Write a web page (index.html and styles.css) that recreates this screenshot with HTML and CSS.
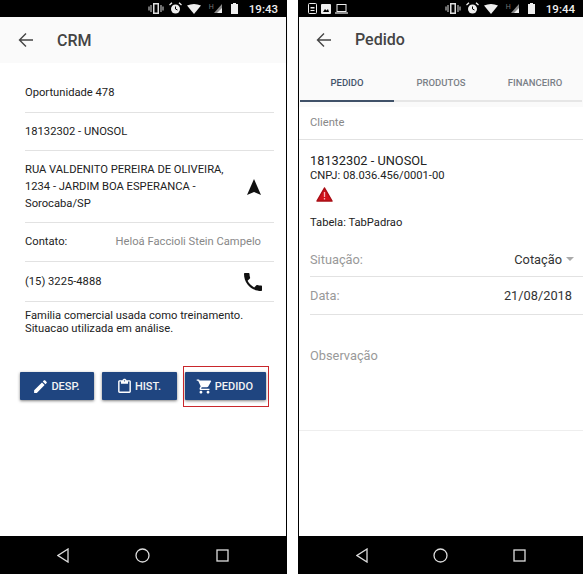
FILE: index.html
```html
<!DOCTYPE html>
<html lang="pt">
  <head>
    <meta charset="UTF-8">
    <meta name="viewport" content="width=device-width, initial-scale=1.0">
    <title>CRM</title>
    <link rel="stylesheet" href="styles.css">
  </head>
  <body>
    <div class="screens">
      <!-- CRM screen -->
      <div class="phone phone-left">
        <div class="status">
          <div class="status-left"></div>
          <div class="status-right">
            <svg class="st" width="16" height="11" viewBox="0 0 16 11"><path d="M5 0h6v11H5z M6.5 1.5v8h3v-8z" fill="#ddd" fill-rule="evenodd"/><path d="M3 2v7M1 3.5v4M13 2v7M15 3.5v4" stroke="#ddd" stroke-width="1"/></svg>
            <svg class="st" width="13" height="13" viewBox="0 0 13 13"><circle cx="6.5" cy="7" r="4.5" fill="#eee"/><path d="M6.5 4.5V7l2 1" stroke="#000" fill="none"/><path d="M0.5 3l2.5-2.2M12.5 3L10 .8" stroke="#eee" stroke-width="1.3"/></svg>
            <svg class="st" width="14" height="10" viewBox="0 0 14 10"><path d="M0 1.500Q7-1.500 14 1.500L7 10z" fill="#eee"/></svg>
            <span class="st-h">H</span>
            <svg class="st st-sig" width="8" height="9" viewBox="0 0 8 9"><path d="M8 0v9H0z" fill="#888"/><path d="M8 4v5H3z" fill="#eee"/></svg>
            <svg class="st st-bat" width="7" height="11" viewBox="0 0 7 11"><path d="M2 0h3v1h2v10H0V1h2z" fill="#eee"/></svg>
            <span class="clock">19:43</span>
          </div>
        </div>
        <div class="appbar">
          <svg class="back" width="16" height="16" viewBox="0 0 16 16"><path d="M15 8H2M8 1.500L1.500 8 8 14.500" fill="none" stroke="#444" stroke-width="1.400"/></svg>
          <span class="title">CRM</span>
        </div>
        <div class="content">
          <div class="info-list">
            <div class="row row-a">Oportunidade 478</div>
            <div class="row row-b">18132302 - UNOSOL</div>
            <div class="row row-c">
              <span class="address">RUA VALDENITO PEREIRA DE OLIVEIRA, 1234 - JARDIM BOA ESPERANCA - Sorocaba/SP</span>
              <svg class="nav-icon" width="14" height="16" viewBox="0 0 14 16"><path d="M7 0L14 16 7 13 0 16z" fill="#111"/></svg>
            </div>
            <div class="row row-d"><span>Contato:</span><span class="contact-name">Heloá Faccioli Stein Campelo</span></div>
            <div class="row row-e">
              <span>(15) 3225-4888</span>
              <svg class="phone-icon" width="18" height="18" viewBox="3 3 18 18"><path d="M6.600 10.800c1.400 2.800 3.800 5.100 6.600 6.600l2.200-2.200c.3-.3.7-.4 1-.2 1.100.4 2.300.6 3.600.6.600 0 1 .4 1 1V20c0 .6-.4 1-1 1C10.600 21 3 13.400 3 4c0-.6.400-1 1-1h3.500c.6 0 1 .4 1 1 0 1.300.2 2.500.6 3.600.1.300 0 .7-.2 1z" fill="#111"/></svg>
            </div>
          </div>
          <p class="note">Familia comercial usada como treinamento.<br>Situacao utilizada em análise.</p>
          <div class="actions">
            <button class="btn btn-desp">
              <svg width="17" height="17" viewBox="0 0 24 24"><path d="M3 17.200V21h3.800L17.800 9.900l-3.700-3.700zM20.700 7c.4-.4.400-1 0-1.400l-2.300-2.300c-.4-.4-1-.4-1.400 0l-1.800 1.800 3.700 3.700z" fill="#fff"/></svg>
              DESP.
            </button>
            <button class="btn btn-hist">
              <svg width="17" height="17" viewBox="0 0 24 24"><path d="M19 3h-4.200C14.400 1.800 13.300 1 12 1s-2.400.8-2.800 2H5c-1.100 0-2 .9-2 2v14c0 1.100.9 2 2 2h14c1.100 0 2-.9 2-2V5c0-1.100-.9-2-2-2zM12 3c.6 0 1 .4 1 1s-.4 1-1 1-1-.4-1-1 .4-1 1-1zm7 16H5V5h2v3h10V5h2z" fill="#fff"/></svg>
              HIST.
            </button>
            <button class="btn btn-pedido">
              <svg width="17" height="17" viewBox="0 0 24 24"><path d="M7 18c-1.100 0-2 .9-2 2s.9 2 2 2 2-.9 2-2-.9-2-2-2zM1 2v2h2l3.600 7.600L5.200 14c-.1.300-.2.600-.2 1 0 1.100.9 2 2 2h12v-2H7.400c-.1 0-.2-.1-.2-.2v-.1l.9-1.700h7.400c.8 0 1.400-.4 1.800-1L21.200 5c.1-.2.200-.3.200-.5 0-.6-.4-1-1-1H5.200l-.9-1.500zm16 16c-1.100 0-2 .9-2 2s.9 2 2 2 2-.9 2-2-.9-2-2-2z" fill="#fff"/></svg>
              PEDIDO
            </button>
            <div class="highlight"></div>
          </div>
        </div>
        <div class="navbar">
          <svg width="12" height="15" viewBox="0 0 12 15"><path d="M11 1L1 7.500 11 14z" fill="none" stroke="#ddd" stroke-width="1.300"/></svg>
          <svg width="15" height="15" viewBox="0 0 15 15"><circle cx="7.500" cy="7.500" r="6.500" fill="none" stroke="#ddd" stroke-width="1.300"/></svg>
          <svg width="13" height="13" viewBox="0 0 13 13"><rect x="1" y="1" width="11" height="11" fill="none" stroke="#ddd" stroke-width="1.300"/></svg>
        </div>
      </div>

      <!-- Pedido screen -->
      <div class="phone phone-right">
        <div class="status">
          <div class="status-left">
            <svg width="9" height="11" viewBox="0 0 9 11"><rect x="0.500" y="0.500" width="8" height="10" rx="1" fill="none" stroke="#eee"/><path d="M2.500 4h4v1.500h-4z M2.500 7h4v1h-4z" fill="#eee"/></svg>
            <svg width="10" height="10" viewBox="0 0 10 10"><rect width="10" height="10" rx="1" fill="#eee"/><path d="M2 8l2-3 1.500 1.500L7 5l1 3z" fill="#000"/></svg>
            <svg width="13" height="10" viewBox="0 0 13 10"><rect x="2" y="0.500" width="9" height="7" fill="none" stroke="#eee"/><path d="M0 9h13" stroke="#eee" stroke-width="1.200"/></svg>
          </div>
          <div class="status-right">
            <svg class="st" width="16" height="11" viewBox="0 0 16 11"><path d="M5 0h6v11H5z M6.500 1.500v8h3v-8z" fill="#ddd" fill-rule="evenodd"/><path d="M3 2v7M1 3.500v4M13 2v7M15 3.500v4" stroke="#ddd" stroke-width="1"/></svg>
            <svg class="st" width="13" height="13" viewBox="0 0 13 13"><circle cx="6.500" cy="7" r="4.500" fill="#eee"/><path d="M6.500 4.500V7l2 1" stroke="#000" fill="none"/><path d="M0.500 3l2.500-2.200M12.500 3L10 .8" stroke="#eee" stroke-width="1.300"/></svg>
            <svg class="st" width="14" height="10" viewBox="0 0 14 10"><path d="M0 1.500Q7-1.500 14 1.500L7 10z" fill="#eee"/></svg>
            <span class="st-h">H</span>
            <svg class="st st-sig" width="8" height="9" viewBox="0 0 8 9"><path d="M8 0v9H0z" fill="#888"/><path d="M8 4v5H3z" fill="#eee"/></svg>
            <svg class="st st-bat" width="7" height="11" viewBox="0 0 7 11"><path d="M2 0h3v1h2v10H0V1h2z" fill="#eee"/></svg>
            <span class="clock">19:44</span>
          </div>
        </div>
        <div class="appbar appbar-tabs">
          <div class="appbar-top">
            <svg class="back" width="16" height="16" viewBox="0 0 16 16"><path d="M15 8H2M8 1.500L1.500 8 8 14.500" fill="none" stroke="#444" stroke-width="1.400"/></svg>
            <span class="title">Pedido</span>
          </div>
          <div class="tabs">
            <div class="tab tab-active">PEDIDO</div>
            <div class="tab">PRODUTOS</div>
            <div class="tab">FINANCEIRO</div>
          </div>
        </div>
        <div class="content">
          <div class="section-label">Cliente</div>
          <div class="client">
            <div class="client-name">18132302 - UNOSOL</div>
            <div class="client-doc">CNPJ: 08.036.456/0001-00</div>
            <svg class="warn" width="17" height="15" viewBox="0 0 17 15"><path d="M8.500 1L16 14H1z" fill="#d0121b" stroke="#a80f16" stroke-width="1.500" stroke-linejoin="round"/><path d="M8.500 5v5M8.500 11v1.500" stroke="#f4b6b6" stroke-width="1.300"/></svg>
            <div class="client-table">Tabela: TabPadrao</div>
          </div>
          <div class="field field-status">
            <span class="field-label">Situação:</span>
            <span class="field-value">Cotação<i class="caret"></i></span>
          </div>
          <div class="field field-date">
            <span class="field-label">Data:</span>
            <span class="field-value field-date-value">21/08/2018</span>
          </div>
          <div class="obs"><span class="field-label">Observação</span></div>
        </div>
        <div class="navbar">
          <svg width="12" height="15" viewBox="0 0 12 15"><path d="M11 1L1 7.500 11 14z" fill="none" stroke="#ddd" stroke-width="1.300"/></svg>
          <svg width="15" height="15" viewBox="0 0 15 15"><circle cx="7.500" cy="7.500" r="6.500" fill="none" stroke="#ddd" stroke-width="1.300"/></svg>
          <svg width="13" height="13" viewBox="0 0 13 13"><rect x="1" y="1" width="11" height="11" fill="none" stroke="#ddd" stroke-width="1.300"/></svg>
        </div>
      </div>
    </div>
  </body>
</html>
```

FILE: styles.css
```css
html, body {
  margin: 0;
  padding: 0;
  background-color: #fff;
}
body {
  font-family: Roboto, "Liberation Sans", sans-serif;
  color: #222;
  overflow: hidden;
}
.screens {
  display: flex;
  justify-content: space-between;
  width: 583px;
  height: 574px;
}
.phone {
  display: flex;
  flex-direction: column;
  height: 574px;
  box-sizing: border-box;
}
.phone-left {
  width: 287px;
  border-right: 1px solid #000;
}
.phone-right {
  width: 285px;
  border-left: 1px solid #000;
}

/* status bar */
.status {
  height: 17px;
  background-color: #000;
  display: flex;
  justify-content: space-between;
  align-items: center;
  flex: none;
}
.status-left {
  display: flex;
  align-items: center;
  gap: 4px;
  padding-left: 9px;
}
.status-right {
  display: flex;
  align-items: center;
  padding-right: 8px;
}
.st {
  display: block;
  margin-right: 5px;
}
.st-h {
  font-size: 7px;
  color: #777;
  margin: -4px 0 0 3px;
}
.st-sig {
  margin-right: 9px;
}
.st-bat {
  margin-right: 11px;
}
.clock {
  font-size: 11.500px;
  font-weight: 500;
  color: #eee;
}

/* app bars */
.appbar {
  height: 46px;
  flex: none;
  background-color: #fafafa;
  box-shadow: 0 1px 2px rgba(0, 0, 0, 0.3);
  display: flex;
  align-items: center;
  padding-left: 18px;
  position: relative;
}
.appbar-tabs {
  display: block;
  height: 90px;
  padding-left: 0;
}
.appbar-top {
  height: 45px;
  display: flex;
  align-items: center;
  padding-left: 17px;
}
.back {
  flex: none;
}
.title {
  margin-left: 23px;
  font-size: 16px;
  font-weight: 500;
  color: #444;
}

/* tabs */
.tabs {
  display: flex;
  height: 38px;
  margin: 0 1px 0 1px;
  border-bottom: 2px solid #e6e6e6;
}
.tab {
  flex: 1;
  display: flex;
  align-items: center;
  justify-content: center;
  box-sizing: border-box;
  padding-top: 2px;
  font-size: 9.500px;
  font-weight: 500;
  color: #7a8087;
  margin-bottom: -2px;
  border-bottom: 2px solid transparent;
}
.tab-active {
  color: #44546a;
  border-bottom-color: #3f5168;
}

.content {
  flex: 1;
  background-color: #fff;
  position: relative;
}

/* CRM list */
.info-list {
  padding: 0 12px 0 25px;
}
.row {
  display: flex;
  align-items: center;
  justify-content: space-between;
  font-size: 11.200px;
  color: #222;
  border-bottom: 1px solid #e2e2e2;
  box-sizing: border-box;
}
.row-a { height: 50px; padding-top: 9px; }
.row-b { height: 38px; }
.row-c { height: 72px; }
.row-d { height: 39px; padding-bottom: 2px; }
.row-e { height: 40px; }
.address {
  width: 212px;
  line-height: 17px;
}
.nav-icon {
  margin-right: 13px;
}
.phone-icon {
  margin-right: 12px;
}
.contact-name {
  color: #888;
  margin-right: 13px;
}
.note {
  margin: 7px 0 0 25px;
  font-size: 11.200px;
  line-height: 13px;
  color: #222;
}

/* buttons */
.actions {
  display: flex;
  gap: 8px;
  margin: 37px 0 0 20px;
  position: relative;
}
.btn {
  height: 28px;
  display: flex;
  align-items: center;
  justify-content: center;
  gap: 2px;
  border: none;
  border-radius: 1px;
  background-color: #1f4580;
  color: #f4f4f4;
  font-family: inherit;
  font-size: 11px;
  font-weight: 500;
  box-shadow: 0 1px 3px rgba(0, 0, 0, 0.5);
  padding: 0 2px 0 0;
}
.btn-desp { width: 74px; }
.btn-hist { width: 75px; }
.btn-pedido { width: 81px; }
.highlight {
  position: absolute;
  left: 163px;
  top: -6px;
  width: 84px;
  height: 39px;
  border: 1px solid #c9272c;
}

/* pedido */
.section-label {
  height: 33px;
  box-sizing: border-box;
  padding: 9px 0 0 11px;
  font-size: 11.200px;
  color: #888;
  border-bottom: 1px solid #e2e2e2;
}
.client {
  padding: 13px 0 0 11px;
  height: 104px;
  box-sizing: border-box;
}
.client-name {
  font-size: 12.800px;
  line-height: 16px;
  color: #222;
}
.client-doc {
  font-size: 11.200px;
  line-height: 13px;
  color: #222;
}
.warn {
  display: block;
  margin: 5px 0 0 6px;
}
.client-table {
  font-size: 11.200px;
  margin-top: 14px;
  color: #222;
}
.field {
  display: flex;
  align-items: center;
  justify-content: space-between;
  box-sizing: border-box;
  margin-left: 11px;
  border-bottom: 1px solid #e2e2e2;
  font-size: 12.800px;
  padding-right: 9px;
}
.field-status { height: 33px; padding-bottom: 2px; }
.field-date { height: 38px; }
.field-date-value { margin-right: 2px; }
.field-label {
  color: #999;
  font-size: 12.800px;
}
.field-value {
  color: #333;
  display: flex;
  align-items: center;
}
.caret {
  width: 0;
  height: 0;
  margin-left: 4px;
  border-left: 4px solid transparent;
  border-right: 4px solid transparent;
  border-top: 4px solid #aaa;
}
.obs {
  height: 116px;
  padding: 30px 0 0 11px;
  box-sizing: border-box;
  border-bottom: 1px solid #eee;
}

/* bottom nav */
.navbar {
  height: 38px;
  flex: none;
  background-color: #000;
  display: flex;
  align-items: center;
  justify-content: space-between;
  padding: 0 57px;
}
```
